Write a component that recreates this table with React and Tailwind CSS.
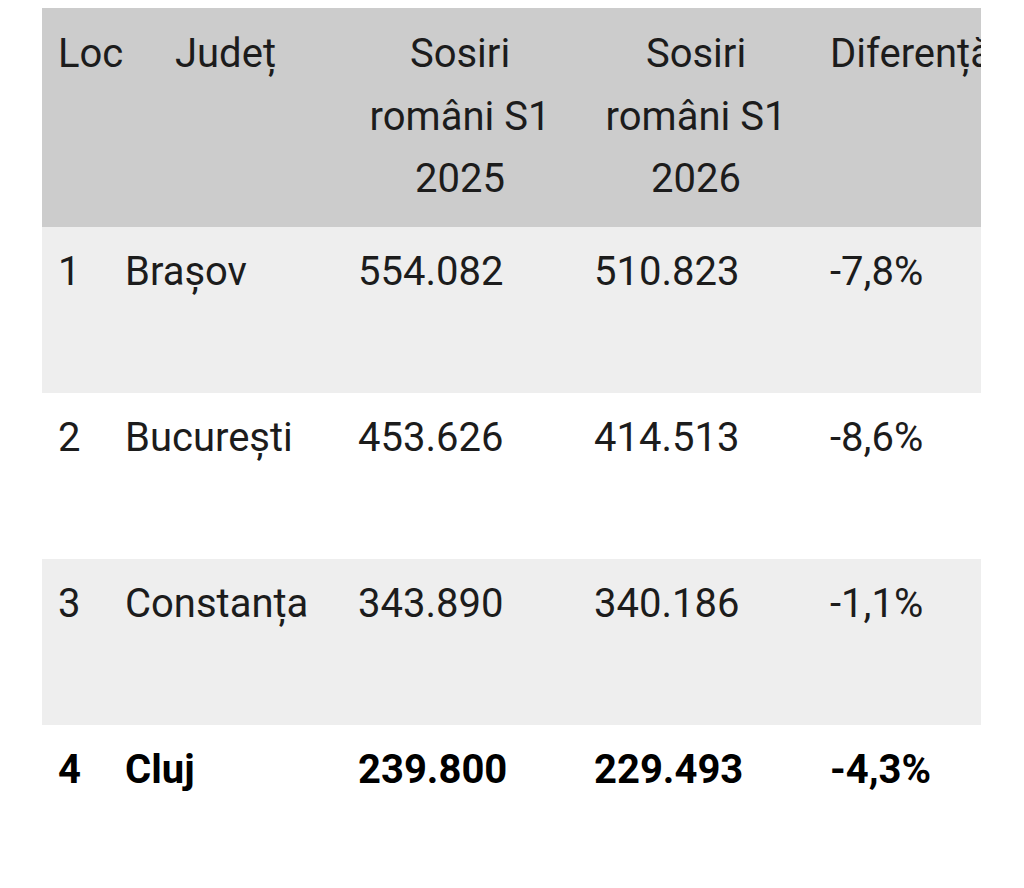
import React from "react";

const rows = [
  { loc: "1", judet: "Brașov", s2025: "554.082", s2026: "510.823", dif: "-7,8%" },
  { loc: "2", judet: "București", s2025: "453.626", s2026: "414.513", dif: "-8,6%" },
  { loc: "3", judet: "Constanța", s2025: "343.890", s2026: "340.186", dif: "-1,1%" },
  { loc: "4", judet: "Cluj", s2025: "239.800", s2026: "229.493", dif: "-4,3%", bold: true },
];

function App() {
  return (
    <div className="w-[1024px] h-[888px] bg-white pt-2 pl-[42px] text-[40px] text-[#1c1c1c]" style={{ fontFamily: "Roboto, 'Noto Sans', sans-serif" }}>
      <div className="w-[939px] overflow-hidden">
        <table className="table-fixed border-collapse w-[1080px]">
          <colgroup>
            <col className="w-[67px]" />
            <col className="w-[233px]" />
            <col className="w-[236px]" />
            <col className="w-[236px]" />
            <col className="w-[308px]" />
          </colgroup>
          <thead>
            <tr className="bg-[#cccccc] leading-[62.5px]">
              <th className="font-normal text-left align-top pl-4 pt-[15px] pb-4 whitespace-nowrap">Loc</th>
              <th className="font-normal text-center align-top px-4 pt-[15px] pb-4">Județ</th>
              <th className="font-normal text-center align-top px-4 pt-[15px] pb-4">
                Sosiri<br />români S1<br />2025
              </th>
              <th className="font-normal text-center align-top px-4 pt-[15px] pb-4">
                Sosiri<br />români S1<br />2026
              </th>
              <th className="font-normal text-left align-top pl-4 pt-[15px] pb-4 whitespace-nowrap">Diferență</th>
            </tr>
          </thead>
          <tbody>
            {rows.map((r, i) => (
              <tr
                key={r.loc}
                className={(i % 2 === 0 ? "bg-[#eeeeee] " : "bg-white ") + (r.bold ? "font-bold text-black " : "") + "h-[166px] leading-[62.5px]"}
              >
                <td className="align-top pl-4 pt-[14px]">{r.loc}</td>
                <td className="align-top pl-4 pt-[14px] whitespace-nowrap">{r.judet}</td>
                <td className="align-top pl-4 pt-[14px]">{r.s2025}</td>
                <td className="align-top pl-4 pt-[14px]">{r.s2026}</td>
                <td className="align-top pl-4 pt-[14px]">{r.dif}</td>
              </tr>
            ))}
          </tbody>
        </table>
      </div>
    </div>
  );
}

export default App;
